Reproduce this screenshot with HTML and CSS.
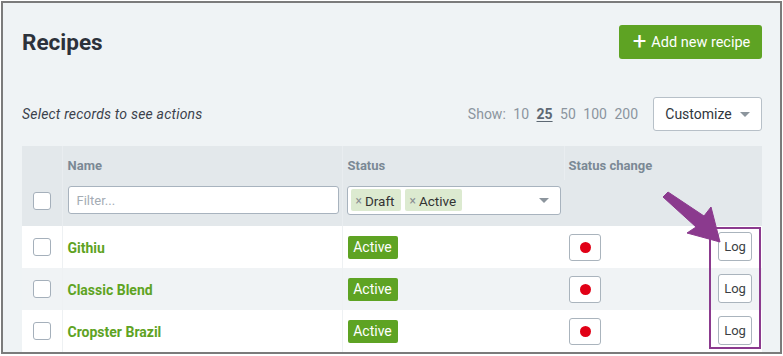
FILE: index.html
```html
<!DOCTYPE html>
<html>
<head>
<meta charset="utf-8">
<link rel="stylesheet" href="styles.css">
</head>
<body>
<div class="frame">
  <div class="head">
    <h1 class="title">Recipes</h1>
    <button class="btn-add"><span class="plus">+</span>Add new recipe</button>
  </div>
  <div class="toolbar">
    <span class="hint">Select records to see actions</span>
    <div class="right">
      <span class="show">Show: <span>10</span> <span class="cur">25</span> <span>50</span> <span>100</span> <span>200</span></span>
      <button class="btn-custom">Customize <span class="caret"></span></button>
    </div>
  </div>
  <table class="grid">
    <colgroup>
      <col class="c-cb"><col class="c-name"><col class="c-status"><col class="c-change"><col class="c-log">
    </colgroup>
    <thead>
      <tr class="th1">
        <th></th><th>Name</th><th>Status</th><th class="nob">Status change</th><th class="nob"></th>
      </tr>
      <tr class="th2">
        <th><span class="cb"></span></th>
        <th><div class="filter">Filter...</div></th>
        <th><div class="select"><span class="tag"><i>×</i>Draft</span><span class="tag"><i>×</i>Active</span><span class="caret"></span></div></th>
        <th class="nob"></th><th class="nob"></th>
      </tr>
    </thead>
    <tbody>
      <tr>
        <td><span class="cb"></span></td><td><a class="name">Githiu</a></td><td><span class="badge">Active</span></td>
        <td class="nob"><span class="chg"><span class="dot"></span></span></td><td class="nob"><span class="log">Log</span></td>
      </tr>
      <tr class="alt">
        <td><span class="cb"></span></td><td><a class="name">Classic Blend</a></td><td><span class="badge">Active</span></td>
        <td class="nob"><span class="chg"><span class="dot"></span></span></td><td class="nob"><span class="log">Log</span></td>
      </tr>
      <tr>
        <td><span class="cb"></span></td><td><a class="name">Cropster Brazil</a></td><td><span class="badge">Active</span></td>
        <td class="nob"><span class="chg"><span class="dot"></span></span></td><td class="nob"><span class="log">Log</span></td>
      </tr>
    </tbody>
  </table>
  <svg class="annot" width="783" height="356" viewBox="0 0 783 356">
    <polygon points="663,197 668,192 704,216 711,207 720,242 687,233 696,227" fill="#8b3a8e" stroke="#8b3a8e" stroke-width="1" stroke-linejoin="round"/>
    <rect x="710" y="228" width="50" height="120" fill="none" stroke="#8b3a8e" stroke-width="2"/>
  </svg>
</div>
</body>
</html>
```

FILE: styles.css
```css
* { box-sizing: border-box; }
html, body { margin: 0; padding: 0; background: #ffffff; }
body { font-family: Roboto, "Liberation Sans", sans-serif; width: 783px; height: 356px; overflow: hidden; }
.frame {
  position: relative;
  margin: 1px 0 0 1px;
  width: 781px;
  height: 353px;
  border: 2px solid #7b7b7b;
  background: #eff3f5;
  padding: 22px 18px 0 19px;
  overflow: hidden;
}
.head { display: flex; justify-content: space-between; align-items: center; height: 34px; }
.title { margin: 0; font-size: 22.5px; font-weight: 700; color: #2c313a; }
.btn-add {
  height: 34px; width: 143px; border: none; border-radius: 3px;
  background: #5ea323; color: #fff; font-family: inherit; font-size: 14.5px;
  display: flex; align-items: center; justify-content: center; gap: 5px; padding: 0 0 0 2px;
}
.btn-add .plus { font-size: 24px; font-weight: 400; line-height: 20px; margin-top: -2px; }
.toolbar { display: flex; justify-content: space-between; align-items: center; margin-top: 38px; height: 34px; }
.hint { font-style: italic; font-size: 14px; color: #3b424c; letter-spacing: 0.2px; }
.right { display: flex; align-items: center; }
.show { font-size: 14px; color: #8b959e; word-spacing: 4px; margin-right: 15px; }
.show .cur { font-weight: 700; color: #5d6873; text-decoration: underline; text-underline-offset: 2px; }
.btn-custom {
  height: 34px; width: 109px; background: #fff; border: 1px solid #b7c0c8; border-radius: 3px;
  font-family: inherit; font-size: 14px; color: #30363d; display: flex; align-items: center; justify-content: center; gap: 8px; padding: 0;
}
.caret { width: 0; height: 0; border-left: 5px solid transparent; border-right: 5px solid transparent; border-top: 5px solid #8c959d; }
.grid { margin-top: 15px; width: 740px; border-collapse: collapse; table-layout: fixed; }
.c-cb { width: 40px; } .c-name { width: 280px; } .c-status { width: 222px; } .c-change { width: 142px; } .c-log { width: 56px; }
.grid th, .grid td { padding: 0 0 0 5px; text-align: left; border-left: 1px solid #eef1f3; }
.grid th:first-child, .grid td:first-child { border-left: none; padding-left: 11px; }
.grid .nob { border-left: none; }
thead { background: #e3e8eb; }
thead th { border-left-color: #e9edf0 !important; }
.th1 th { height: 34px; padding-top: 4px; font-size: 13px; font-weight: 700; color: #7b8995; }
.th2 th { height: 46px; padding-top: 0; vertical-align: middle; }
.th2 th.nob, .th1 th.nob { border-left: none; }
.th1 th:nth-child(4) { border-left: 1px solid #e9edf0; padding-left: 4px; }
.cb { display: block; width: 18px; height: 18px; border: 1.5px solid #a5b0bb; border-radius: 3px; background: #fff; }
.th2 .cb { margin-top: -5px; }
.filter {
  height: 28px; width: 271px; background: #fff; border: 1px solid #a8b3be; border-radius: 3px;
  font-size: 13px; font-weight: 400; color: #a4acb4; padding: 6px 8px; margin-top: -6px;
}
.select {
  height: 29px; width: 214px; background: #fff; border: 1px solid #a8b3be; border-radius: 3px;
  display: flex; align-items: center; padding: 0 3px; gap: 4px; margin-top: -6px; margin-left: -1px;
}
.select .tag { background: #dcead0; height: 22px; border-radius: 2px; font-size: 13.5px; font-weight: 400; color: #333; padding: 1px 6px 0 5px; display: flex; align-items: center; }
.select .tag i { font-style: normal; color: #8a8f93; font-size: 12px; margin-right: 3px; }
.select .caret { margin-left: auto; margin-right: 8px; }
tbody tr { height: 42px; background: #ffffff; }
tbody tr.alt { background: #f0f3f5; }
tbody td { vertical-align: middle; }
.name { font-size: 14px; font-weight: 700; color: #5ea323; }
.badge { display: inline-block; height: 23px; width: 50px; line-height: 23px; text-align: center; background: #5ea323; color: #fff; font-size: 14px; border-radius: 2px; }
.chg { display: flex; align-items: center; justify-content: center; width: 32px; height: 27px; background: #fff; border: 1px solid #aab4bd; border-radius: 3px; }
.dot { width: 11px; height: 11px; border-radius: 50%; background: #e10016; }
.log { display: flex; align-items: center; justify-content: center; width: 34px; height: 29px; background: #fff; border: 1px solid #aab4bd; border-radius: 3px; font-size: 13px; color: #3b3f44; margin-left: 7px; margin-top: -2px; }
.annot { position: absolute; left: -3px; top: -3px; pointer-events: none; }
```
